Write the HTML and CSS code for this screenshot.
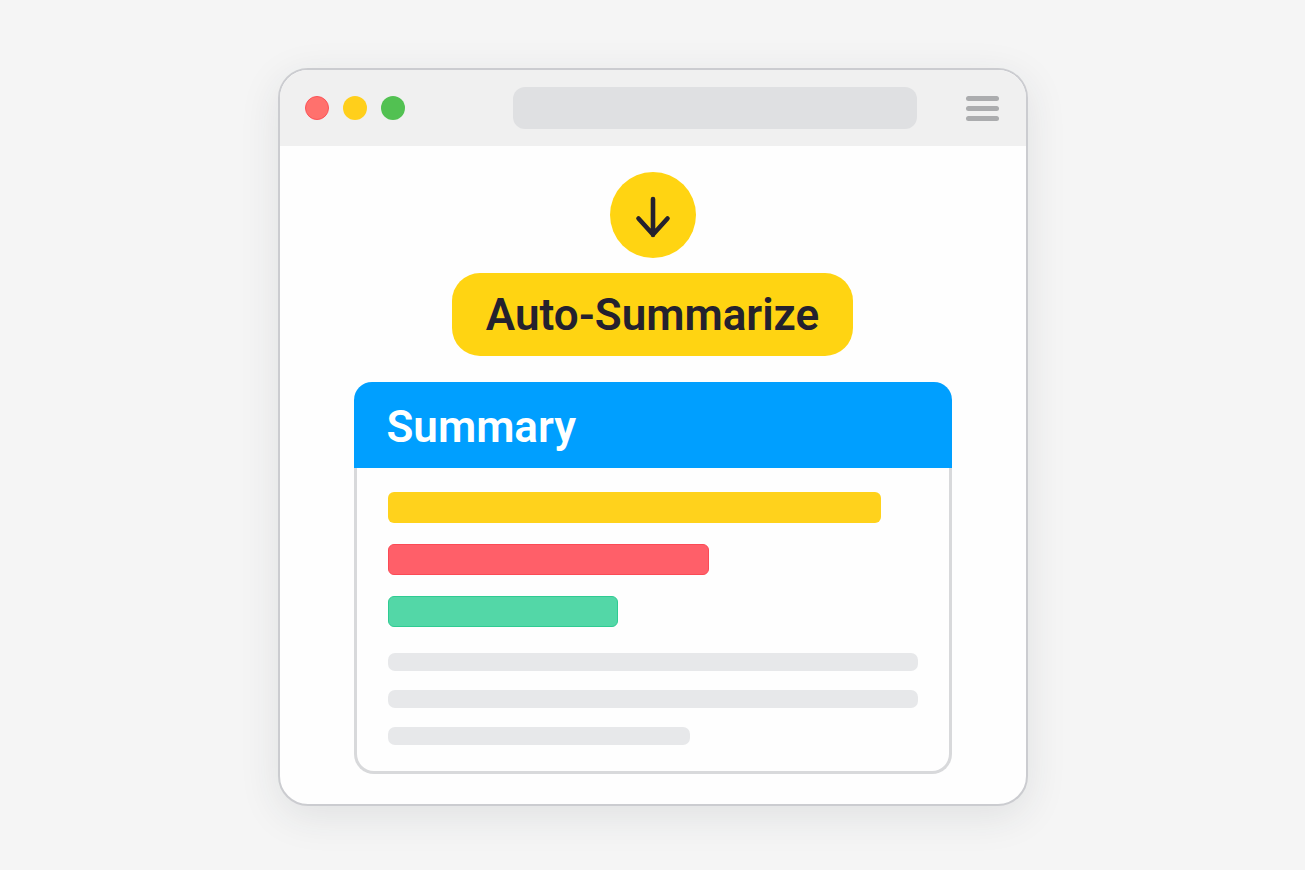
FILE: index.html
```
<!DOCTYPE html>
<html lang="en">
<head>
    <meta charset="UTF-8">
    <meta name="viewport" content="width=device-width, initial-scale=1.0">
    <title>Auto-Summarize</title>
    <link rel="stylesheet" href="styles.css">
</head>
<body>
    <div class="window">
        <header class="toolbar">
            <div class="dots">
                <span class="dot dot-red"></span>
                <span class="dot dot-yellow"></span>
                <span class="dot dot-green"></span>
            </div>
            <input class="address" type="text" aria-label="Address">
            <button class="menu" type="button" aria-label="Menu">
                <span></span>
                <span></span>
                <span></span>
            </button>
        </header>

        <main class="content">
            <div class="arrow">
                <svg width="36" height="44" viewBox="0 0 36 44" fill="none" stroke="#24212e" stroke-width="4.6" stroke-linecap="round" stroke-linejoin="round">
                    <path d="M18 4V40M3.5 23.5L18 39.5L32.5 23.5"/>
                </svg>
            </div>
            <button class="summarize" type="button">Auto-Summarize</button>

            <section class="card">
                <h2 class="card-title">Summary</h2>
                <div class="card-body">
                    <div class="bars">
                        <div class="bar bar-yellow"></div>
                        <div class="bar bar-red"></div>
                        <div class="bar bar-green"></div>
                    </div>
                    <div class="lines">
                        <div class="line"></div>
                        <div class="line"></div>
                        <div class="line line-short"></div>
                    </div>
                </div>
            </section>
        </main>
    </div>
</body>
</html>
```
FILE: styles.css
```
*{
    box-sizing: border-box;
    margin: 0;
}
body{
    min-height: 100vh;
    padding: 68px 24px 64px;
    background-color: #f5f5f5;
    font-family: Roboto, "Liberation Sans", sans-serif;
}
.window{
    max-width: 750px;
    margin: 0 auto;
    overflow: hidden;
    background-color: #fefefe;
    border: 2px solid #cbccd0;
    border-radius: 30px;
    box-shadow: 0 10px 40px rgba(40, 45, 60, 0.1);
}

/* toolbar */
.toolbar{
    display: flex;
    align-items: center;
    height: 76px;
    padding: 0 27px 0 25px;
    background-color: #f0f0f0;
}
.dots{
    display: flex;
    gap: 14px;
}
.dot{
    width: 24px;
    height: 24px;
    border-radius: 50%;
}
.dot-red{
    background-color: #ff716d;
    border: 1px solid #fb5257;
}
.dot-yellow{
    background-color: #ffcf1b;
}
.dot-green{
    background-color: #52c152;
}
.address{
    flex: 1;
    min-width: 0;
    height: 42px;
    margin: 0 49px 0 108px;
    padding: 0 16px;
    background-color: #dfe0e2;
    border: none;
    border-radius: 12px;
    font: inherit;
}
.menu{
    display: flex;
    flex-direction: column;
    gap: 5px;
    width: 33px;
    padding: 0;
    background: none;
    border: none;
    cursor: pointer;
}
.menu span{
    height: 5px;
    background-color: #abacae;
    border-radius: 3px;
}

/* content */
.content{
    display: flex;
    flex-direction: column;
    align-items: center;
    padding: 26px 24px 30px;
}
.arrow{
    display: flex;
    justify-content: center;
    align-items: center;
    width: 86px;
    height: 86px;
    padding-top: 4px;
    background-color: #ffd412;
    border-radius: 50%;
}
.summarize{
    height: 83px;
    margin-top: 15px;
    padding: 0 34px;
    background-color: #ffd412;
    color: #24212e;
    border: none;
    border-radius: 28px;
    font: inherit;
    font-size: 44px;
    font-weight: 600;
    cursor: pointer;
}

/* summary card */
.card{
    width: 100%;
    max-width: 598px;
    margin-top: 26px;
}
.card-title{
    padding: 4px 33px 0;
    background-color: #009fff;
    color: white;
    border-radius: 18px 18px 0 0;
    font-size: 44px;
    font-weight: 600;
    line-height: 82px;
}
.card-body{
    padding: 24px 31px 26px;
    border: 3px solid #d8d9db;
    border-top: none;
    border-radius: 0 0 20px 20px;
}
.bars{
    display: flex;
    flex-direction: column;
    gap: 21px;
}
.bar{
    height: 31px;
    border-radius: 6px;
}
.bar-yellow{
    width: 93.2%;
    background-color: #ffd21c;
}
.bar-red{
    width: 60.6%;
    background-color: #ff5f69;
    border: 1px solid #fb4a55;
}
.bar-green{
    width: 43.4%;
    background-color: #53d7a7;
    border: 1px solid #2fcb92;
}
.lines{
    display: flex;
    flex-direction: column;
    gap: 19px;
    margin-top: 26px;
}
.line{
    height: 18px;
    background-color: #e7e8ea;
    border-radius: 7px;
}
.line-short{
    width: 57%;
}
```
